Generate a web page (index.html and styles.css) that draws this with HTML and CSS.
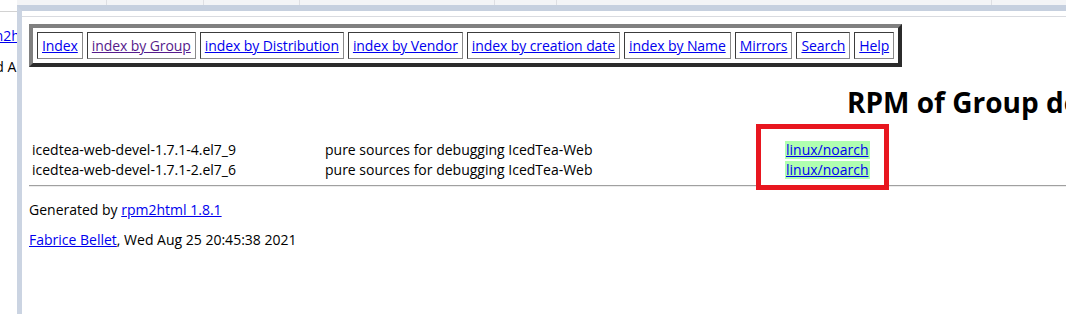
FILE: index.html
```html
<!DOCTYPE html>
<html lang="en">
<head>
    <meta charset="UTF-8">
    <title>RPM of Group devel</title>
    <link rel="stylesheet" href="styles.css">
</head>
<body>
<div class="desk">
    <div class="behind">
        <div class="behind-rule"></div>
        <a class="behind-link" href="#">rpm2html</a>
        <div class="behind-text">and Architecture</div>
    </div>

    <div class="win">
        <div class="tabs">
            <span></span><span></span><span></span><span></span><span></span><span></span><span></span>
        </div>
        <div class="win-main">
            <div class="page">
                <table class="nav">
                    <tr>
                        <td><a href="#">Index</a></td>
                        <td><a class="visited" href="#">index by Group</a></td>
                        <td><a href="#">index by Distribution</a></td>
                        <td><a href="#">index by Vendor</a></td>
                        <td><a href="#">index by creation date</a></td>
                        <td><a href="#">index by Name</a></td>
                        <td><a href="#">Mirrors</a></td>
                        <td><a href="#">Search</a></td>
                        <td><a href="#">Help</a></td>
                    </tr>
                </table>

                <h1>RPM of Group devel</h1>

                <table class="rpms">
                    <tr>
                        <td class="name">icedtea-web-devel-1.7.1-4.el7_9</td>
                        <td class="desc">pure sources for debugging IcedTea-Web</td>
                        <td class="dist"><a href="#">linux/noarch</a></td>
                    </tr>
                    <tr>
                        <td class="name">icedtea-web-devel-1.7.1-2.el7_6</td>
                        <td class="desc">pure sources for debugging IcedTea-Web</td>
                        <td class="dist"><a href="#">linux/noarch</a></td>
                    </tr>
                </table>

                <hr>
                <p>Generated by <a href="#">rpm2html 1.8.1</a></p>
                <p><a href="#">Fabrice Bellet</a>, Wed Aug 25 20:45:38 2021</p>

                <div class="mark"></div>
            </div>
        </div>
    </div>
</div>
</body>
</html>
```

FILE: styles.css
```css
html, body {
    margin: 0;
    padding: 0;
    background: #fff;
}

body {
    font-family: "Open Sans", "Liberation Sans", sans-serif;
    font-size: 14px;
    color: #000;
    overflow: hidden;
}

a {
    color: #0000ee;
}

a.visited {
    color: #551a8b;
}

.desk {
    display: flex;
    width: 1066px;
    height: 314px;
    overflow: hidden;
}

/* window behind, only a thin slice is visible */
.behind {
    width: 17px;
    flex: none;
    overflow: hidden;
    white-space: nowrap;
}

.behind-rule {
    height: 1px;
    margin-top: 11px;
    background: #d2d2d2;
}

.behind-link {
    display: block;
    margin-top: 16px;
    line-height: 16px;
    text-indent: -24px;
}

.behind-text {
    margin-top: 15px;
    line-height: 16px;
    text-indent: -21px;
}

.win {
    flex: 1;
    display: flex;
    flex-direction: column;
}

.tabs {
    height: 5px;
    display: grid;
    grid-template-columns: 90px 97px 96px 195px 62px 435px 1fr;
    background: #f3f4f6;
}

.tabs span {
    border-right: 1px solid #dedfe3;
}

.tabs span:last-child {
    border-right: none;
}

.win-main {
    flex: 1;
    border-left: 5px solid #cbd4e2;
    border-top: 6px solid #c6d0df;
    padding-right: 9px;
}

.page {
    position: relative;
    height: 100%;
    margin-top: 5px;
    border-top: 1px solid #d9dbe0;
    padding: 7px 7px;
    overflow: hidden;
    white-space: nowrap;
}

/* navigation bar */
.nav {
    border-style: solid;
    border-width: 4px;
    border-color: #808080 #2b2b2b #2b2b2b #808080;
    border-spacing: 4px;
    letter-spacing: -0.09px;
}

.nav td {
    padding: 4px 4px;
    line-height: 17px;
    border: 1px solid;
    border-color: #3c3c3c #8a8a8a #8a8a8a #3c3c3c;
}

h1 {
    margin: 18px 0 20px 818px;
    font-size: 28px;
    line-height: 34px;
    font-weight: bold;
}

.rpms {
    border-spacing: 2px;
}

.rpms td {
    padding: 1px;
    line-height: 16px;
}

.rpms .name {
    width: 289px;
}

.rpms .desc {
    width: 457px;
}

.rpms .dist {
    background: #b0ffb0;
}

hr {
    margin: 4px 0 14px;
    border: none;
    border-top: 1px solid #a0a0a0;
    border-bottom: 1px solid #ececec;
}

p {
    margin: 12px 0;
    line-height: 18px;
}

/* red highlight drawn over the screenshot */
.mark {
    position: absolute;
    left: 734px;
    top: 107px;
    width: 123px;
    height: 56px;
    border: 5px solid #e8161f;
}
```
